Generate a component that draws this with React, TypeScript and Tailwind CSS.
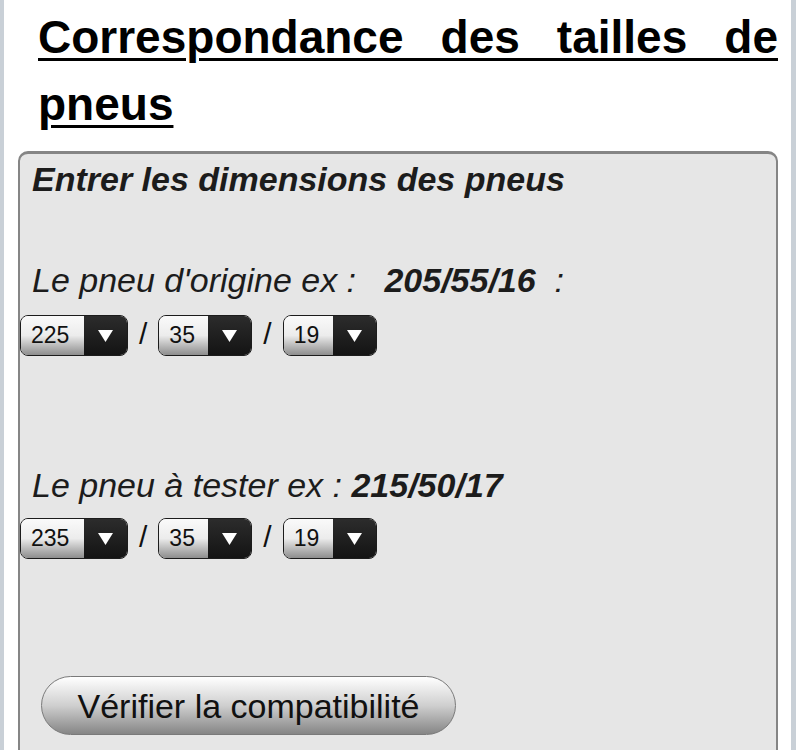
import React, { useState } from 'react';

type Dims = { width: string; height: string; rim: string };

const WIDTHS = ['155', '165', '175', '185', '195', '205', '215', '225', '235', '245', '255', '265', '275'];
const HEIGHTS = ['30', '35', '40', '45', '50', '55', '60', '65', '70'];
const RIMS = ['13', '14', '15', '16', '17', '18', '19', '20'];

const Caret: React.FC = () => (
  <svg width="15" height="12" viewBox="0 0 15 12" className="block">
    <polygon points="0,0 15,0 7.5,12" fill="#ffffff" />
  </svg>
);

// iOS-style select: light gradient field with the value, dark box with the caret
const TireSelect: React.FC<{ value: string; options: string[]; wide?: boolean; onChange: (v: string) => void }> = ({ value, options, wide, onChange }) => (
  <div className={`relative flex h-[41px] rounded-[8px] border-[1.5px] border-[#1c1c1c] overflow-hidden ${wide ? 'w-[108px]' : 'w-[94px]'}`}>
    <div className="flex-1 flex items-center pl-[10px] bg-gradient-to-b from-[#fafafa] via-[#ececec] to-[#8e8e8e] text-[23px] text-[#111] leading-none">
      {value}
    </div>
    <div className="w-[43px] flex items-center justify-center bg-gradient-to-b from-[#2c2c2c] to-[#141414]">
      <Caret />
    </div>
    <select
      value={value}
      onChange={e => onChange(e.target.value)}
      className="absolute inset-0 opacity-0 cursor-pointer"
    >
      {options.map(o => (
        <option key={o} value={o}>{o}</option>
      ))}
    </select>
  </div>
);

const Slash: React.FC = () => <span className="mx-[11px] text-[30px] leading-none text-[#111] -mt-[4px]">/</span>;

const DimsRow: React.FC<{ dims: Dims; setDims: (d: Dims) => void }> = ({ dims, setDims }) => (
  <div className="flex items-center">
    <TireSelect wide value={dims.width} options={WIDTHS} onChange={v => setDims({ ...dims, width: v })} />
    <Slash />
    <TireSelect value={dims.height} options={HEIGHTS} onChange={v => setDims({ ...dims, height: v })} />
    <Slash />
    <TireSelect value={dims.rim} options={RIMS} onChange={v => setDims({ ...dims, rim: v })} />
  </div>
);

const App: React.FC = () => {
  const [origin, setOrigin] = useState<Dims>({ width: '225', height: '35', rim: '19' });
  const [test, setTest] = useState<Dims>({ width: '235', height: '35', rim: '19' });

  return (
    <div className="h-[750px] w-full overflow-hidden bg-[#c9d0d7] pl-[4px] pr-[5px] font-['Liberation_Sans',Arial,sans-serif]">
      <div className="h-full bg-white">
        <h1 className="pl-[34px] pr-[13px] pt-[4px] text-[46px] leading-[67px] font-bold text-black text-justify underline decoration-[3px] underline-offset-[5px]">
          Correspondance des tailles de pneus
        </h1>

        <div className="mt-[13px] ml-[14px] mr-[13px] h-[700px] rounded-[10px] border-2 border-t-[3px] border-[#858585] bg-[#e6e6e6] pt-[6px]">
          <p className="pl-[12px] text-[34px] leading-[39px] font-bold italic text-[#1c1c1c]">
            Entrer les dimensions des pneus
          </p>

          <p className="mt-[62px] pl-[12px] text-[34px] leading-[39px] italic text-[#1c1c1c] whitespace-pre">
            {"Le pneu d'origine ex :   "}
            <b>205/55/16</b>
            {"  :"}
          </p>
          <div className="mt-[15px]">
            <DimsRow dims={origin} setDims={setOrigin} />
          </div>

          <p className="mt-[110px] pl-[12px] text-[34px] leading-[39px] italic text-[#1c1c1c]">
            Le pneu à tester ex : <b>215/50/17</b>
          </p>
          <div className="mt-[13px]">
            <DimsRow dims={test} setDims={setTest} />
          </div>

          <button
            type="button"
            className="mt-[117px] ml-[21px] h-[59px] w-[415px] rounded-full border-[1.5px] border-[#7a7a7a] bg-gradient-to-b from-[#ffffff] via-[#cfcfcf] to-[#868686] text-[34px] leading-none text-[#111]"
          >
            Vérifier la compatibilité
          </button>
        </div>
      </div>
    </div>
  );
};

export default App;
